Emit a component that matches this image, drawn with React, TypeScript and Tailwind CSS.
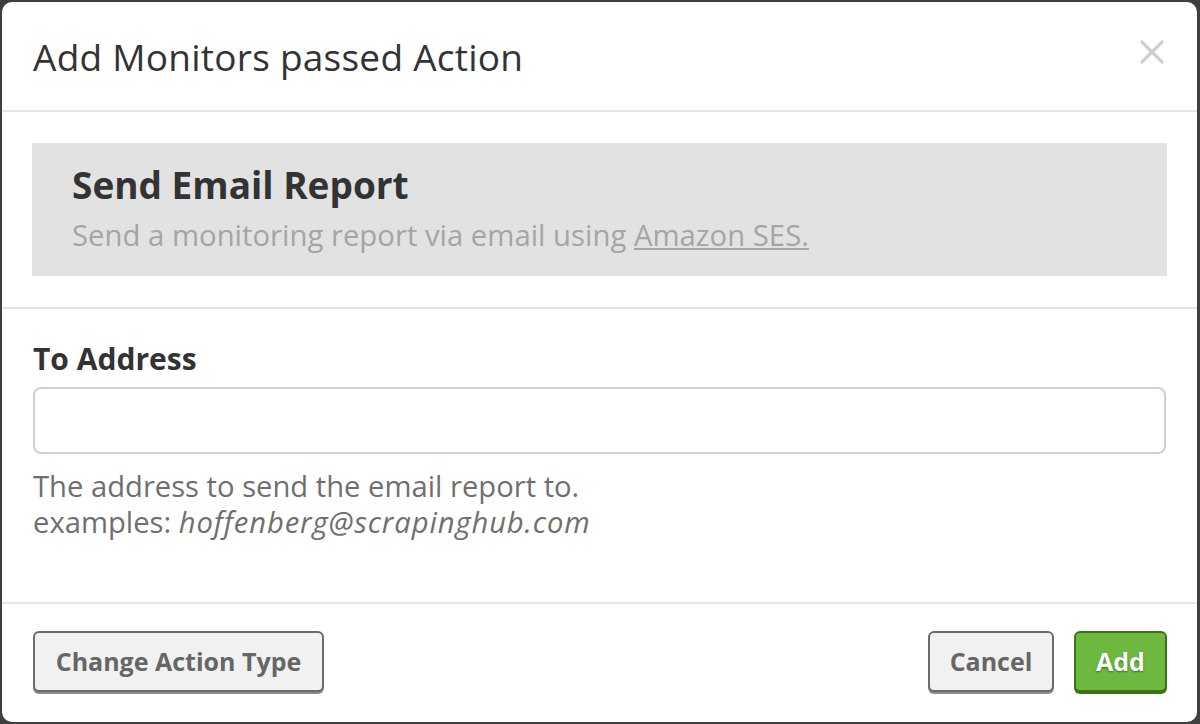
export default function App() {
  return (
    <div
      className="w-[1200px] h-[724px] bg-[#3f3f3f] p-[2px] pr-[3px]"
      style={{ fontFamily: '"Open Sans", "DejaVu Sans", sans-serif' }}
    >
      <div className="h-[720px] bg-white rounded-[10px] flex flex-col overflow-hidden">
        {/* header */}
        <div className="h-[110px] shrink-0 flex items-center justify-between pl-[31px] pr-[32px] border-b-2 border-[#e5e5e5]">
          <h4 className="text-[37px] text-[#333] leading-none tracking-[0.25px]">Add Monitors passed Action</h4>
          <svg width="26" height="24" viewBox="0 0 26 24" className="mb-[8px]">
            <path d="M2 1 L24 23 M24 1 L2 23" stroke="#cfcfcf" strokeWidth="3.2" />
          </svg>
        </div>

        {/* action info */}
        <div className="shrink-0 px-[30px] pt-[31px] pb-[31px] border-b-2 border-[#e5e5e5]">
          <div className="bg-[#e2e2e2] h-[133px] pl-[40px] flex flex-col justify-center">
            <h3 className="text-[37px] font-bold text-[#333] leading-[50px] -mt-[4px]">Send Email Report</h3>
            <p className="text-[29.3px] text-[#a5a5a5] leading-[42px] mt-[4px]">
              Send a monitoring report via email using{' '}
              <a className="underline">Amazon SES.</a>
            </p>
          </div>
        </div>

        {/* form */}
        <div className="flex-1 px-[31px] pt-[30px] border-b-2 border-[#e5e5e5]">
          <label className="block text-[30px] font-bold text-[#333] leading-[40px]">To Address</label>
          <input
            className="mt-[8px] block w-full h-[67px] rounded-[8px] border-2 border-[#d0d0d0] outline-none"
            type="text"
          />
          <div className="mt-[14px] text-[29.2px] text-[#6f6f6f] leading-[36px]">
            <div>The address to send the email report to.</div>
            <div>
              examples: <em className="tracking-[0.9px]">hoffenberg@scrapinghub.com</em>
            </div>
          </div>
        </div>

        {/* footer */}
        <div className="h-[118px] shrink-0 flex items-start justify-between pl-[31px] pr-[30px] pt-[27px]">
          <button className="h-[61px] w-[291px] rounded-[6px] border-2 border-[#6b6b6b] bg-[#f1f1f1] text-[25px] font-bold text-[#666] shadow-[0_2px_0_#8a8a8a]">
            Change Action Type
          </button>
          <div className="flex gap-[20px]">
            <button className="h-[61px] w-[126px] rounded-[6px] border-2 border-[#6b6b6b] bg-[#f1f1f1] text-[25px] font-bold text-[#666] shadow-[0_2px_0_#8a8a8a]">
              Cancel
            </button>
            <button className="h-[61px] w-[93px] rounded-[6px] border-2 border-[#3b7417] bg-[#6db940] text-[25px] font-bold text-white [text-shadow:0_1px_2px_rgba(0,0,0,0.45)] shadow-[0_2px_0_#3b7417]">
              Add
            </button>
          </div>
        </div>
      </div>
    </div>
  );
}
